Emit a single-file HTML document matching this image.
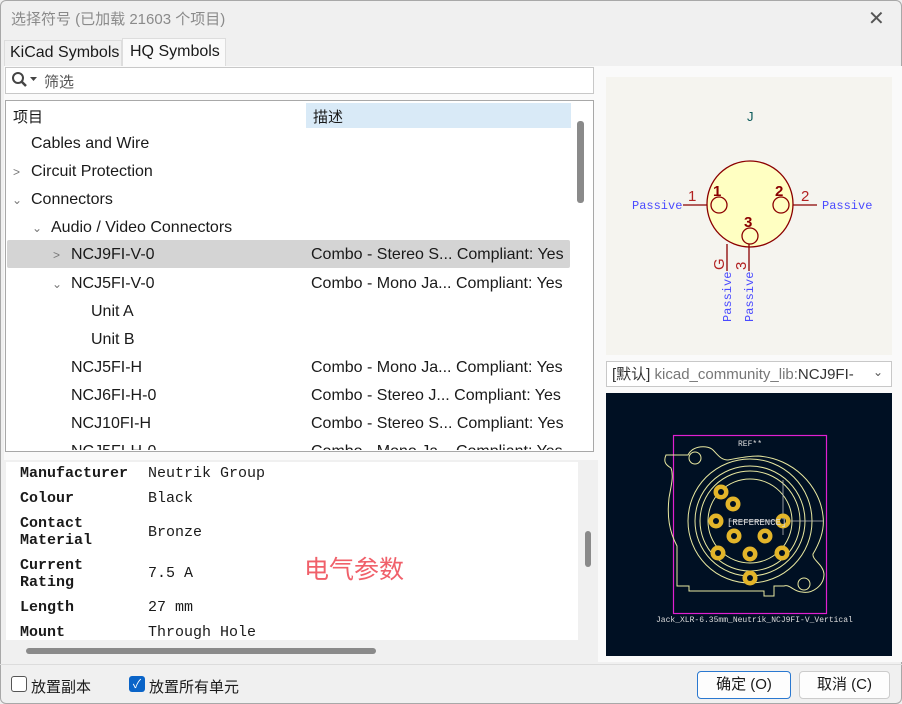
<!DOCTYPE html>
<html><head><meta charset="utf-8"><style>
*{box-sizing:border-box;margin:0;padding:0}
body{width:902px;height:704px;background:#f0f0f0;font-family:"Liberation Sans","Noto Sans CJK SC",sans-serif;position:relative;overflow:hidden;color:#1a1a1a;font-size:15px}
.a{position:absolute}
.row{position:absolute;left:6px;width:564px;height:28px;line-height:28px;white-space:nowrap;font-size:16px}
.row .d{position:absolute;left:305px}
.chev{position:absolute;color:#777;font-size:12px}
.mono{font-family:"Liberation Mono","Noto Sans CJK SC",monospace;font-size:15px;position:absolute;line-height:17px}
.b{font-weight:bold}
</style></head><body>
<div class="a" style="left:0;top:0;width:902px;height:704px;border:1px solid #a8a8a8;border-radius:6px"></div>
<div class="a" style="left:11px;top:8px;color:#8a8a8a;font-size:15px">选择符号 (已加载 21603 个项目)</div>
<div class="a" style="left:868px;top:6px;color:#555;font-size:20px">✕</div>
<!-- tabs -->
<div class="a" style="left:4px;top:40px;width:118px;height:26px;border:1px solid #ddd;border-bottom:none;background:#f0f0f0;padding:3px 0 0 5px;font-size:16px">KiCad Symbols</div>
<div class="a" style="left:122px;top:38px;width:104px;height:29px;border:1px solid #ddd;border-bottom:none;background:#fafafa;padding:4px 0 0 7px;font-size:16px">HQ Symbols</div>
<div class="a" style="left:4px;top:66px;width:594px;height:394px;background:#fafafa"></div>
<!-- filter -->
<div class="a" style="left:5px;top:67px;width:589px;height:27px;background:#fff;border:1px solid #c8c8c8"></div>
<svg class="a" style="left:11px;top:71px" width="30" height="18"><circle cx="7" cy="7" r="5" fill="none" stroke="#444" stroke-width="2"/><path d="M11 11l4 4" stroke="#444" stroke-width="2.5"/><path d="M19 6h7l-3.5 4z" fill="#444"/></svg>
<div class="a" style="left:44px;top:71px;color:#555">筛选</div>
<!-- tree -->
<div class="a" style="left:5px;top:100px;width:589px;height:352px;background:#fff;border:1px solid #a8a8a8;overflow:hidden">
<div class="a" style="left:300px;top:2px;width:265px;height:25px;background:#d9eaf7"></div>
<div class="a" style="left:7px;top:5px">项目</div>
<div class="a" style="left:307px;top:5px">描述</div>
<div class="a" style="left:571px;top:20px;width:7px;height:82px;background:#8a8a8a;border-radius:3px"></div>
</div>
<div class="row" style="top:130px"><span class="a" style="left:25px">Cables and Wire</span></div>
<div class="row" style="top:158px"><span class="chev" style="left:7px">&gt;</span><span class="a" style="left:25px">Circuit Protection</span></div>
<div class="row" style="top:186px"><span class="chev" style="left:6px">⌄</span><span class="a" style="left:25px">Connectors</span></div>
<div class="row" style="top:214px"><span class="chev" style="left:26px">⌄</span><span class="a" style="left:45px">Audio / Video Connectors</span></div>
<div class="row" style="top:240px;left:7px;width:563px;background:#d4d4d4;border-radius:2px;line-height:30px"><span class="chev" style="left:46px">&gt;</span><span class="a" style="left:64px">NCJ9FI-V-0</span><span class="d" style="left:304px">Combo - Stereo S... Compliant: Yes</span></div>
<div class="row" style="top:270px"><span class="chev" style="left:46px">⌄</span><span class="a" style="left:65px">NCJ5FI-V-0</span><span class="d">Combo - Mono Ja... Compliant: Yes</span></div>
<div class="row" style="top:298px"><span class="a" style="left:85px">Unit A</span></div>
<div class="row" style="top:326px"><span class="a" style="left:85px">Unit B</span></div>
<div class="row" style="top:354px"><span class="a" style="left:65px">NCJ5FI-H</span><span class="d">Combo - Mono Ja... Compliant: Yes</span></div>
<div class="row" style="top:382px"><span class="a" style="left:65px">NCJ6FI-H-0</span><span class="d">Combo - Stereo J... Compliant: Yes</span></div>
<div class="row" style="top:410px"><span class="a" style="left:65px">NCJ10FI-H</span><span class="d">Combo - Stereo S... Compliant: Yes</span></div>
<div class="a" style="left:6px;top:438px;width:564px;height:12px;overflow:hidden"><div class="row" style="left:0;top:0"><span class="a" style="left:65px">NCJ5FI-H-0</span><span class="d">Combo - Mono Ja... Compliant: Yes</span></div></div>
<!-- details -->
<div class="a" style="left:6px;top:462px;width:572px;height:178px;background:#fff"></div>
<div class="mono b" style="left:20px;top:465px">Manufacturer</div><div class="mono" style="left:148px;top:465px">Neutrik Group</div>
<div class="mono b" style="left:20px;top:490px">Colour</div><div class="mono" style="left:148px;top:490px">Black</div>
<div class="mono b" style="left:20px;top:515px">Contact<br>Material</div><div class="mono" style="left:148px;top:524px">Bronze</div>
<div class="mono b" style="left:20px;top:557px">Current<br>Rating</div><div class="mono" style="left:148px;top:565px">7.5 A</div>
<div class="mono b" style="left:20px;top:599px">Length</div><div class="mono" style="left:148px;top:599px">27 mm</div>
<div class="mono b" style="left:20px;top:624px">Mount</div><div class="mono" style="left:148px;top:624px">Through Hole</div>
<div class="a" style="left:304px;top:550px;color:#f0606a;font-size:25px">电气参数</div>
<div class="a" style="left:585px;top:531px;width:6px;height:36px;background:#8a8a8a;border-radius:3px"></div>
<div class="a" style="left:26px;top:648px;width:350px;height:6px;background:#8a8a8a;border-radius:3px"></div>
<!-- right -->
<div class="a" style="left:598px;top:66px;width:304px;height:596px;background:#fafafa"></div>
<svg class="a" style="left:606px;top:77px" width="286" height="278" viewBox="606 77 286 278">
<rect x="606" y="77" width="286" height="278" fill="#f5f4ef"/>
<text x="747" y="121" font-family="Liberation Sans" font-size="13" fill="#0a5a5a">J</text>
<circle cx="750" cy="204" r="43" fill="#ffffc2" stroke="#8b0000" stroke-width="1.3"/>
<g fill="none" stroke="#8b0000" stroke-width="1.3">
<circle cx="719" cy="205" r="8"/><circle cx="781" cy="205" r="8"/><circle cx="750" cy="236" r="8"/>
<path d="M683 205h24M793 205h24M727 244v27M749 244v27"/></g>
<g font-family="Liberation Sans" font-size="15" font-weight="bold" fill="#8b0000"><text x="713" y="196">1</text><text x="775" y="196">2</text><text x="744" y="227">3</text></g>
<g font-family="Liberation Sans" font-size="15" fill="#b22222"><text x="688" y="201">1</text><text x="801" y="201">2</text>
<text transform="translate(724,270) rotate(-90)">G</text><text transform="translate(746,270) rotate(-90)">3</text></g>
<g font-family="Liberation Mono" font-size="12" fill="#4a4aff"><text x="632" y="209">Passive</text><text x="822" y="209">Passive</text>
<text transform="translate(731,322) rotate(-90)">Passive</text><text transform="translate(753,322) rotate(-90)">Passive</text></g>
</svg>
<div class="a" style="left:606px;top:361px;width:286px;height:26px;background:#fff;border:1px solid #c8c8c8;padding:0 0 0 5px;white-space:nowrap;overflow:hidden;color:#333;font-size:15px;line-height:25px">[默认] <span style="color:#777">kicad_community_lib:</span>NCJ9FI-</div>
<div class="a" style="left:866px;top:365px;width:24px;height:18px;background:#fff;color:#555;font-size:12px;text-align:center">⌄</div>
<svg class="a" style="left:606px;top:393px" width="286" height="263" viewBox="606 393 286 263">
<rect x="606" y="393" width="286" height="263" fill="#001023"/>
<rect x="673.5" y="435.5" width="153" height="178" fill="none" stroke="#e020d0" stroke-width="1.2"/>
<g fill="none" stroke="#e8e8a0" stroke-width="1">
<path d="M688 455c5-10 20-10 25 -5c5 5 8 10 15 10c10-2 20-4 30-4c35 2 62 30 65 60c2 15-4 28-10 38c-1 6 10 10 11 20c0 12-12 20-22 18c-8 0-12-8-18-6h-10v10h-10v-5h-75v-5h-12v-40c-8-15-10-30-8-48c2-12 5-22 2-30c-5-3-8-6-5-13z"/>
<circle cx="695" cy="458" r="6"/><circle cx="804" cy="584" r="6"/>
<circle cx="750" cy="521" r="62"/><circle cx="750" cy="521" r="55"/><circle cx="750" cy="521" r="50"/><circle cx="750" cy="521" r="42"/>
</g>
<g stroke="#bbb" stroke-width="0.8" fill="none"><path d="M729 521h95M783 480v55"/></g>
<g fill="#e3b52a">
<circle cx="721" cy="492" r="7.5"/><circle cx="733" cy="504" r="7.5"/><circle cx="716" cy="521" r="7.5"/><circle cx="783" cy="521" r="7.5"/><circle cx="734" cy="536" r="7.5"/><circle cx="765" cy="536" r="7.5"/><circle cx="718" cy="553" r="7.5"/><circle cx="750" cy="554" r="7.5"/><circle cx="782" cy="553" r="7.5"/><circle cx="750" cy="578" r="7.5"/></g>
<g fill="#001023">
<circle cx="721" cy="492" r="3"/><circle cx="733" cy="504" r="3"/><circle cx="716" cy="521" r="3"/><circle cx="783" cy="521" r="3"/><circle cx="734" cy="536" r="3"/><circle cx="765" cy="536" r="3"/><circle cx="718" cy="553" r="3"/><circle cx="750" cy="554" r="3"/><circle cx="782" cy="553" r="3"/><circle cx="750" cy="578" r="3"/></g>
<g font-family="Liberation Mono" fill="#ddd"><text x="738" y="446" font-size="8">REF**</text><text x="727" y="525" font-size="9">[REFERENCE]</text><text x="656" y="622" font-size="8">Jack_XLR-6.35mm_Neutrik_NCJ9FI-V_Vertical</text></g>
</svg>
<!-- bottom -->
<div class="a" style="left:0;top:664px;width:902px;height:1px;background:#dcdcdc"></div>
<div class="a" style="left:11px;top:676px;width:16px;height:16px;border:1px solid #555;border-radius:3px;background:#fff"></div>
<div class="a" style="left:31px;top:676px">放置副本</div>
<div class="a" style="left:129px;top:676px;width:16px;height:16px;border-radius:3px;background:#0a64c8;color:#fff;font-size:12px;text-align:center;line-height:16px">✓</div>
<div class="a" style="left:149px;top:676px">放置所有单元</div>
<div class="a" style="left:697px;top:671px;width:94px;height:28px;border:1px solid #2a78d0;border-radius:4px;background:#fdfdfd;text-align:center;line-height:26px">确定 (O)</div>
<div class="a" style="left:799px;top:671px;width:91px;height:28px;border:1px solid #ccc;border-radius:4px;background:#fdfdfd;text-align:center;line-height:26px">取消 (C)</div>
</body></html>
